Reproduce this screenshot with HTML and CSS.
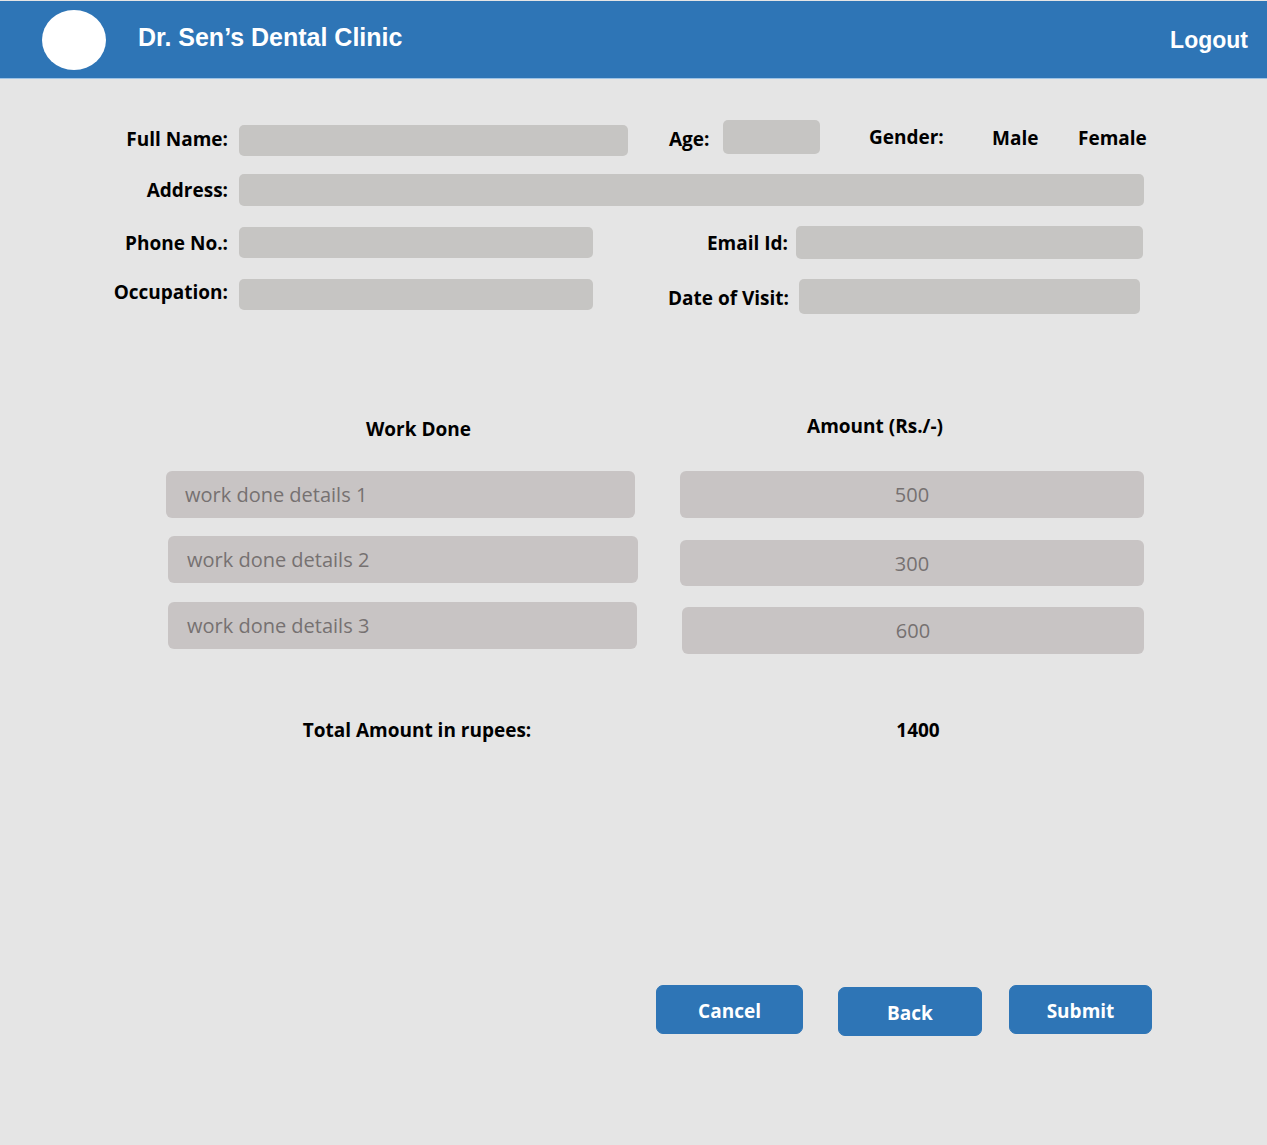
FILE: index.html
```html
<!DOCTYPE html>
<html lang="en">
<head>
<meta charset="utf-8">
<title>Dr. Sen's Dental Clinic</title>
<link rel="stylesheet" href="styles.css">
</head>
<body>
<header class="topbar">
  <div class="logo"></div>
  <h1 class="brand">Dr. Sen’s Dental Clinic</h1>
  <a class="logout" href="#">Logout</a>
</header>

<main class="page">
  <section class="patient">
    <div class="row row-1">
      <label class="lbl">Full Name:</label>
      <div class="field f-name"></div>
      <label class="lbl-age">Age:</label>
      <div class="field f-age"></div>
      <span class="gender">Gender:</span>
      <span class="opt opt-male">Male</span>
      <span class="opt opt-female">Female</span>
    </div>
    <div class="row row-2">
      <label class="lbl">Address:</label>
      <div class="field f-address"></div>
    </div>
    <div class="row row-3">
      <label class="lbl">Phone No.:</label>
      <div class="field f-half"></div>
      <label class="lbl-right">Email Id:</label>
      <div class="field f-email"></div>
    </div>
    <div class="row row-4">
      <label class="lbl">Occupation:</label>
      <div class="field f-half"></div>
      <label class="lbl-right lbl-visit">Date of Visit:</label>
      <div class="field f-visit"></div>
    </div>
  </section>

  <section class="work">
    <div class="work-col">
      <h2 class="col-head head-left">Work Done</h2>
      <div class="cell cell-l c1">work done details 1</div>
      <div class="cell cell-l c2">work done details 2</div>
      <div class="cell cell-l c3">work done details 3</div>
    </div>
    <div class="work-col col-right">
      <h2 class="col-head head-right">Amount (Rs./-)</h2>
      <div class="cell cell-r r1">500</div>
      <div class="cell cell-r r2">300</div>
      <div class="cell cell-r r3">600</div>
    </div>
  </section>

  <section class="total">
    <span class="total-label">Total Amount in rupees:</span>
    <span class="total-value">1400</span>
  </section>

  <section class="actions">
    <button class="btn btn-cancel">Cancel</button>
    <button class="btn btn-back">Back</button>
    <button class="btn btn-submit">Submit</button>
  </section>
</main>
</body>
</html>
```

FILE: styles.css
```css
* { box-sizing: border-box; }

html, body {
  margin: 0;
  padding: 0;
}

body {
  background: #e5e5e5;
  font-family: "Open Sans", Lato, "Liberation Sans", sans-serif;
  color: #000;
  width: 1267px;
  min-height: 1145px;
}

.topbar {
  margin-top: 1px;
  height: 78px;
  background: #2e75b6;
  display: flex;
  align-items: center;
  padding: 0 19px 0 42px;
  border-bottom: 1px solid #9dc3e6;
}

.logo {
  width: 64px;
  height: 60px;
  border-radius: 50%;
  background: #fff;
}

.brand {
  margin: 0 0 4px 32px;
  font-family: "Liberation Sans", Arial, sans-serif;
  font-weight: bold;
  font-size: 25px;
  color: #fff;
}

.logout {
  margin-left: auto;
  margin-top: 2px;
  font-family: "Liberation Sans", Arial, sans-serif;
  font-weight: bold;
  font-size: 23px;
  color: #fff;
  text-decoration: none;
}

.page {
  padding-top: 40px;
}

.row {
  display: flex;
  align-items: center;
}

.lbl {
  width: 228px;
  text-align: right;
  font-weight: bold;
  font-size: 19px;
  margin-right: 11px;
  white-space: nowrap;
}

.field {
  background: #c6c5c3;
  border-radius: 5px;
  height: 32px;
}

.row-1 { height: 36px; }
.f-name { width: 389px; height: 31px; margin-top: 6px; }
.row-1 .lbl { margin-top: 4px; }

.lbl-age {
  margin-left: 41px;
  width: 44px;
  font-weight: bold;
  font-size: 19px;
  margin-top: 4px;
  white-space: nowrap;
}
.f-age {
  margin-left: 10px;
  width: 97px;
  height: 34px;
  margin-top: -1px;
}
.gender {
  margin-left: 49px;
  width: 76px;
  font-weight: bold;
  font-size: 19px;
  margin-top: -1px;
  white-space: nowrap;
}
.opt {
  font-weight: bold;
  font-size: 19px;
  margin-top: 2px;
  white-space: nowrap;
}
.opt-male { margin-left: 47px; width: 48px; }
.opt-female { margin-left: 38px; }

.row-2 { margin-top: 19px; }
.f-address { width: 905px; }

.row-3 { margin-top: 20px; }
.f-half { width: 354px; height: 31px; }

.lbl-right {
  width: 203px;
  text-align: right;
  padding-right: 8px;
  font-weight: bold;
  font-size: 19px;
  white-space: nowrap;
}
.f-email { width: 347px; height: 33px; }

.row-4 { margin-top: 20px; align-items: flex-start; }
.lbl-visit { width: 206px; padding-right: 10px; margin-top: 6px; }
.f-visit { width: 341px; height: 35px; }

.work {
  margin-top: 97px;
  display: flex;
  padding-left: 166px;
}

.work-col {
  width: 471px;
  display: flex;
  flex-direction: column;
}

.col-right {
  margin-left: 43px;
  width: 464px;
}

.col-head {
  margin: 0;
  font-size: 19px;
  font-weight: bold;
  text-align: center;
  height: 30px;
  line-height: 30px;
  white-space: nowrap;
}
.head-left { padding-left: 34px; margin-top: 3px; }
.head-right { padding-right: 74px; margin-bottom: 3px; }

.cell {
  background: #c8c4c4;
  border-radius: 6px;
  height: 47px;
  display: flex;
  align-items: center;
  font-size: 20px;
  color: #767171;
}

.cell-l { padding-left: 19px; }
.c1 { margin-top: 27px; width: 469px; }
.c2 { margin-top: 18px; margin-left: 2px; width: 470px; }
.c3 { margin-top: 19px; margin-left: 2px; width: 469px; }

.cell-r { justify-content: center; }
.r1 { margin-top: 27px; }
.r2 { margin-top: 22px; height: 46px; }
.r3 { margin-top: 21px; margin-left: 2px; width: 462px; }

.total {
  margin-top: 63px;
  display: flex;
  font-weight: bold;
  font-size: 19px;
  white-space: nowrap;
}
.total-label {
  width: 834px;
  text-align: center;
}
.total-value {
  width: 168px;
  text-align: center;
}

.actions {
  margin-top: 242px;
  display: flex;
  align-items: flex-start;
  padding-left: 656px;
}

.btn {
  background: #2e75b6;
  color: #fff;
  border: 1px solid #2e75b6;
  border-radius: 7px;
  height: 49px;
  font-family: "Open Sans", Lato, "Liberation Sans", sans-serif;
  font-weight: bold;
  font-size: 19px;
  padding: 3px 0 0 0;
}
.btn-cancel { width: 147px; }
.btn-back { width: 144px; margin-left: 35px; margin-top: 2px; }
.btn-submit { width: 143px; margin-left: 27px; }
```
